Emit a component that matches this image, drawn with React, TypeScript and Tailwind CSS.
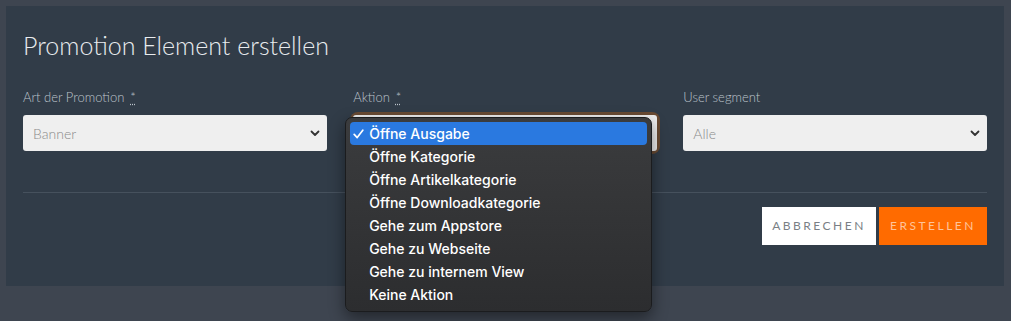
import React from 'react';

const actions = [
  'Öffne Ausgabe',
  'Öffne Kategorie',
  'Öffne Artikelkategorie',
  'Öffne Downloadkategorie',
  'Gehe zum Appstore',
  'Gehe zu Webseite',
  'Gehe zu internem View',
  'Keine Aktion',
];

const Chevron = () => (
  <svg width="10" height="7" viewBox="0 0 10 7" className="shrink-0">
    <path d="M1.5 1.5 5 5l3.5-3.5" fill="none" stroke="#333" strokeWidth="1.8" strokeLinecap="round" strokeLinejoin="round" />
  </svg>
);

const Check = () => (
  <svg width="11" height="10" viewBox="0 0 11 10">
    <path d="M1.2 5.4 4.2 8.6 9.8 1.2" fill="none" stroke="#fff" strokeWidth="1.7" strokeLinecap="round" strokeLinejoin="round" />
  </svg>
);

const Label = ({ text, required }: { text: string; required?: boolean }) => (
  <div className="h-[18px] text-[13px] leading-[18px] text-[#bcc3cb] font-light">
    {text}
    {required && (
      <span className="ml-[6px] underline decoration-dotted underline-offset-2">*</span>
    )}
  </div>
);

const SelectBox = ({ value }: { value: string }) => (
  <div className="flex h-[36px] items-center justify-between rounded-[3px] bg-[#efefef] pl-[10px] pr-[7px]">
    <span className="text-[14px] font-light text-[#8a8a8a]">{value}</span>
    <Chevron />
  </div>
);

export default function App() {
  return (
    <div className="h-[321px] bg-[#3e4550] px-[6px] pt-[6px] font-['Lato',sans-serif]">
      <div className="h-[280px] w-[998px] bg-[#313c48] px-[17px] pt-[23px]">
        <h1 className="text-[25px] font-light leading-[32px] text-[#e8ebee]">
          Promotion Element erstellen
        </h1>

        <div className="mt-[27px] grid grid-cols-3 gap-x-[26.5px]">
          <div>
            <Label text="Art der Promotion" required />
            <div className="mt-[9px]">
              <SelectBox value="Banner" />
            </div>
          </div>

          <div className="relative">
            <Label text="Aktion" required />
            <div className="mt-[9px] rounded-[5px] ring-[3px] ring-[#6a4b33]">
              <SelectBox value="" />
            </div>

            {/* native dropdown popup */}
            <div className="absolute left-[-8px] top-[29px] z-10 w-[307px] rounded-[7px] border border-[#1b1c1e] bg-gradient-to-b from-[#3b3c3e] to-[#2c2d2f] px-[4px] pb-[5px] pt-[4px] shadow-[0_6px_16px_rgba(0,0,0,0.45)] font-['Inter',sans-serif]">
              {actions.map((a, i) => (
                <div
                  key={a}
                  className={`flex h-[23px] items-center rounded-[4px] text-[14px] font-medium leading-[23px] text-white ${
                    i === 0 ? 'bg-[#2a79e0]' : ''
                  }`}
                >
                  <span className="flex w-[19px] justify-start pl-[3px]">{i === 0 ? <Check /> : null}</span>
                  <span>{a}</span>
                </div>
              ))}
            </div>
          </div>

          <div>
            <Label text="User segment" />
            <div className="mt-[9px]">
              <SelectBox value="Alle" />
            </div>
          </div>
        </div>

        <div className="mt-[41px] h-px bg-[#46515d]" />

        <div className="mt-[14px] flex justify-end gap-[3px]">
          <button className="h-[38px] w-[114px] bg-white text-[12px] tracking-[2.5px] text-[#7a7f85]">
            ABBRECHEN
          </button>
          <button className="h-[38px] w-[108px] bg-[#ff6b00] text-[12px] tracking-[2.5px] text-[#ffc49a]">
            ERSTELLEN
          </button>
        </div>
      </div>
    </div>
  );
}
